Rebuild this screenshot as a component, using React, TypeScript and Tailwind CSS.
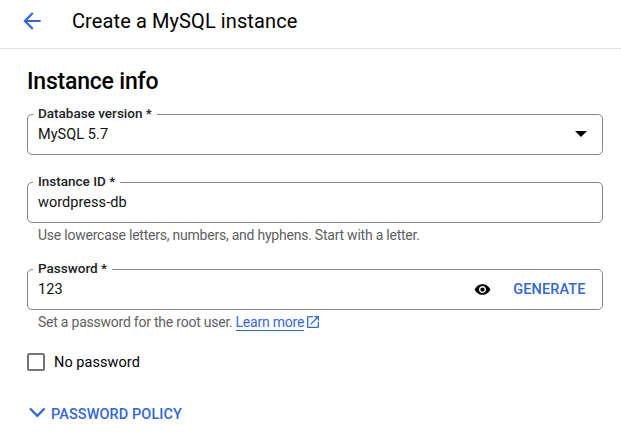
import type { ReactNode } from "react";

function Field({ label, children }: { label: ReactNode; children: ReactNode }) {
  return (
    <fieldset className="h-[49px] w-[576px] rounded-[5px] border border-[#80868b] pl-[5px]">
      <legend className="h-[17px] px-[5px] text-[13.5px] leading-[14px] font-medium text-[#202124]">{label}</legend>
      <div className="flex h-6 items-center pl-[5px] text-[14.5px] leading-[22px] tracking-[0.05px] text-[#111]">
        {children}
      </div>
    </fieldset>
  );
}

export default function App() {
  return (
    <main className="h-[445px] w-[621px] overflow-hidden bg-white font-['Roboto','Liberation_Sans',sans-serif] text-black">
      <header className="flex h-[49px] items-center border-b border-[#e0e0e0] pb-1.5 pl-[19px]">
        <svg className="size-[26px] text-[#3367d6]" viewBox="0 0 24 24" fill="currentColor">
          <path d="M20 11H7.83l5.59-5.59L12 4l-8 8 8 8 1.41-1.41L7.83 13H20v-2z" />
        </svg>
        <h1 className="ml-[27px] text-[20px] leading-6 tracking-[0.1px] whitespace-nowrap">Create a MySQL instance</h1>
      </header>

      <section className="flex flex-col items-start pt-[19px] pl-[27px]">
        <h2 className="h-[38px] text-[23px] leading-[28px] font-medium tracking-[-0.2px] whitespace-nowrap">
          Instance info
        </h2>

        <Field label="Database version *">
          <span>MySQL 5.7</span>
          <svg className="mr-[15px] mb-0.5 ml-auto h-[6px] w-3" viewBox="0 0 12 6">
            <path d="M0 0h12L6 6z" />
          </svg>
        </Field>

        <div className="mt-[19px] h-[87px]">
          <Field label="Instance ID *">wordpress-db</Field>
          <p className="mt-[2px] pl-[11px] text-[14px] leading-5 tracking-[-0.23px] text-[#5f6061]">
            Use lowercase letters, numbers, and hyphens. Start with a letter.
          </p>
        </div>

        <Field label="Password *">
          <span>123</span>
          <svg className="mb-0.5 ml-auto size-[17px]" viewBox="0 0 24 24">
            <path d="M12 4.5C7 4.5 2.73 7.61 1 12c1.73 4.39 6 7.5 11 7.5s9.27-3.11 11-7.5c-1.73-4.39-6-7.5-11-7.5zM12 17c-2.76 0-5-2.24-5-5s2.24-5 5-5 5 2.24 5 5-2.24 5-5 5zm0-8c-1.66 0-3 1.34-3 3s1.34 3 3 3 3-1.34 3-3-1.34-3-3-3z" />
          </svg>
          <button className="mr-[16.5px] ml-[22.5px] text-[14.5px] font-medium tracking-[0.1px] text-[#3367d6]">
            GENERATE
          </button>
        </Field>
        <p className="mt-[3px] flex h-5 pl-[11px] text-[14px] leading-[19px] tracking-[-0.23px] text-[#5f6061]">
          Set a password for the root user.
          <a className="ml-[3px] h-[18px] border-b border-[#3367d6] text-[#3367d6]">Learn more</a>
          <svg className="mt-px ml-px size-4 text-[#3367d6]" viewBox="0 0 24 24" fill="currentColor">
            <path d="M19 19H5V5h7V3H5c-1.11 0-2 .9-2 2v14c0 1.1.89 2 2 2h14c1.1 0 2-.9 2-2v-7h-2v7zM14 3v2h3.59l-9.83 9.83 1.41 1.41L19 6.41V10h2V3h-7z" />
          </svg>
        </p>

        <label className="mt-[19px] flex h-5 items-center text-[14.5px] leading-5 tracking-[0.05px]">
          <span className="mr-[9px] size-[18px] rounded-[2px] border-2 border-[#757575]" />
          <span className="pt-[2px]">No password</span>
        </label>

        <button className="mt-8 flex h-5 items-center text-[14.5px] leading-5 font-medium tracking-[0.08px] text-[#3367d6]">
          <svg className="mr-[5px] mb-[3px] ml-0.5 h-[11px] w-[17px]" viewBox="0 0 17 11" fill="none" stroke="currentColor" strokeWidth="2.3">
            <path d="M1 1.5 8.3 8.8 15.6 1.5" />
          </svg>
          <span className="pt-[2px]">PASSWORD POLICY</span>
        </button>
      </section>
    </main>
  );
}
